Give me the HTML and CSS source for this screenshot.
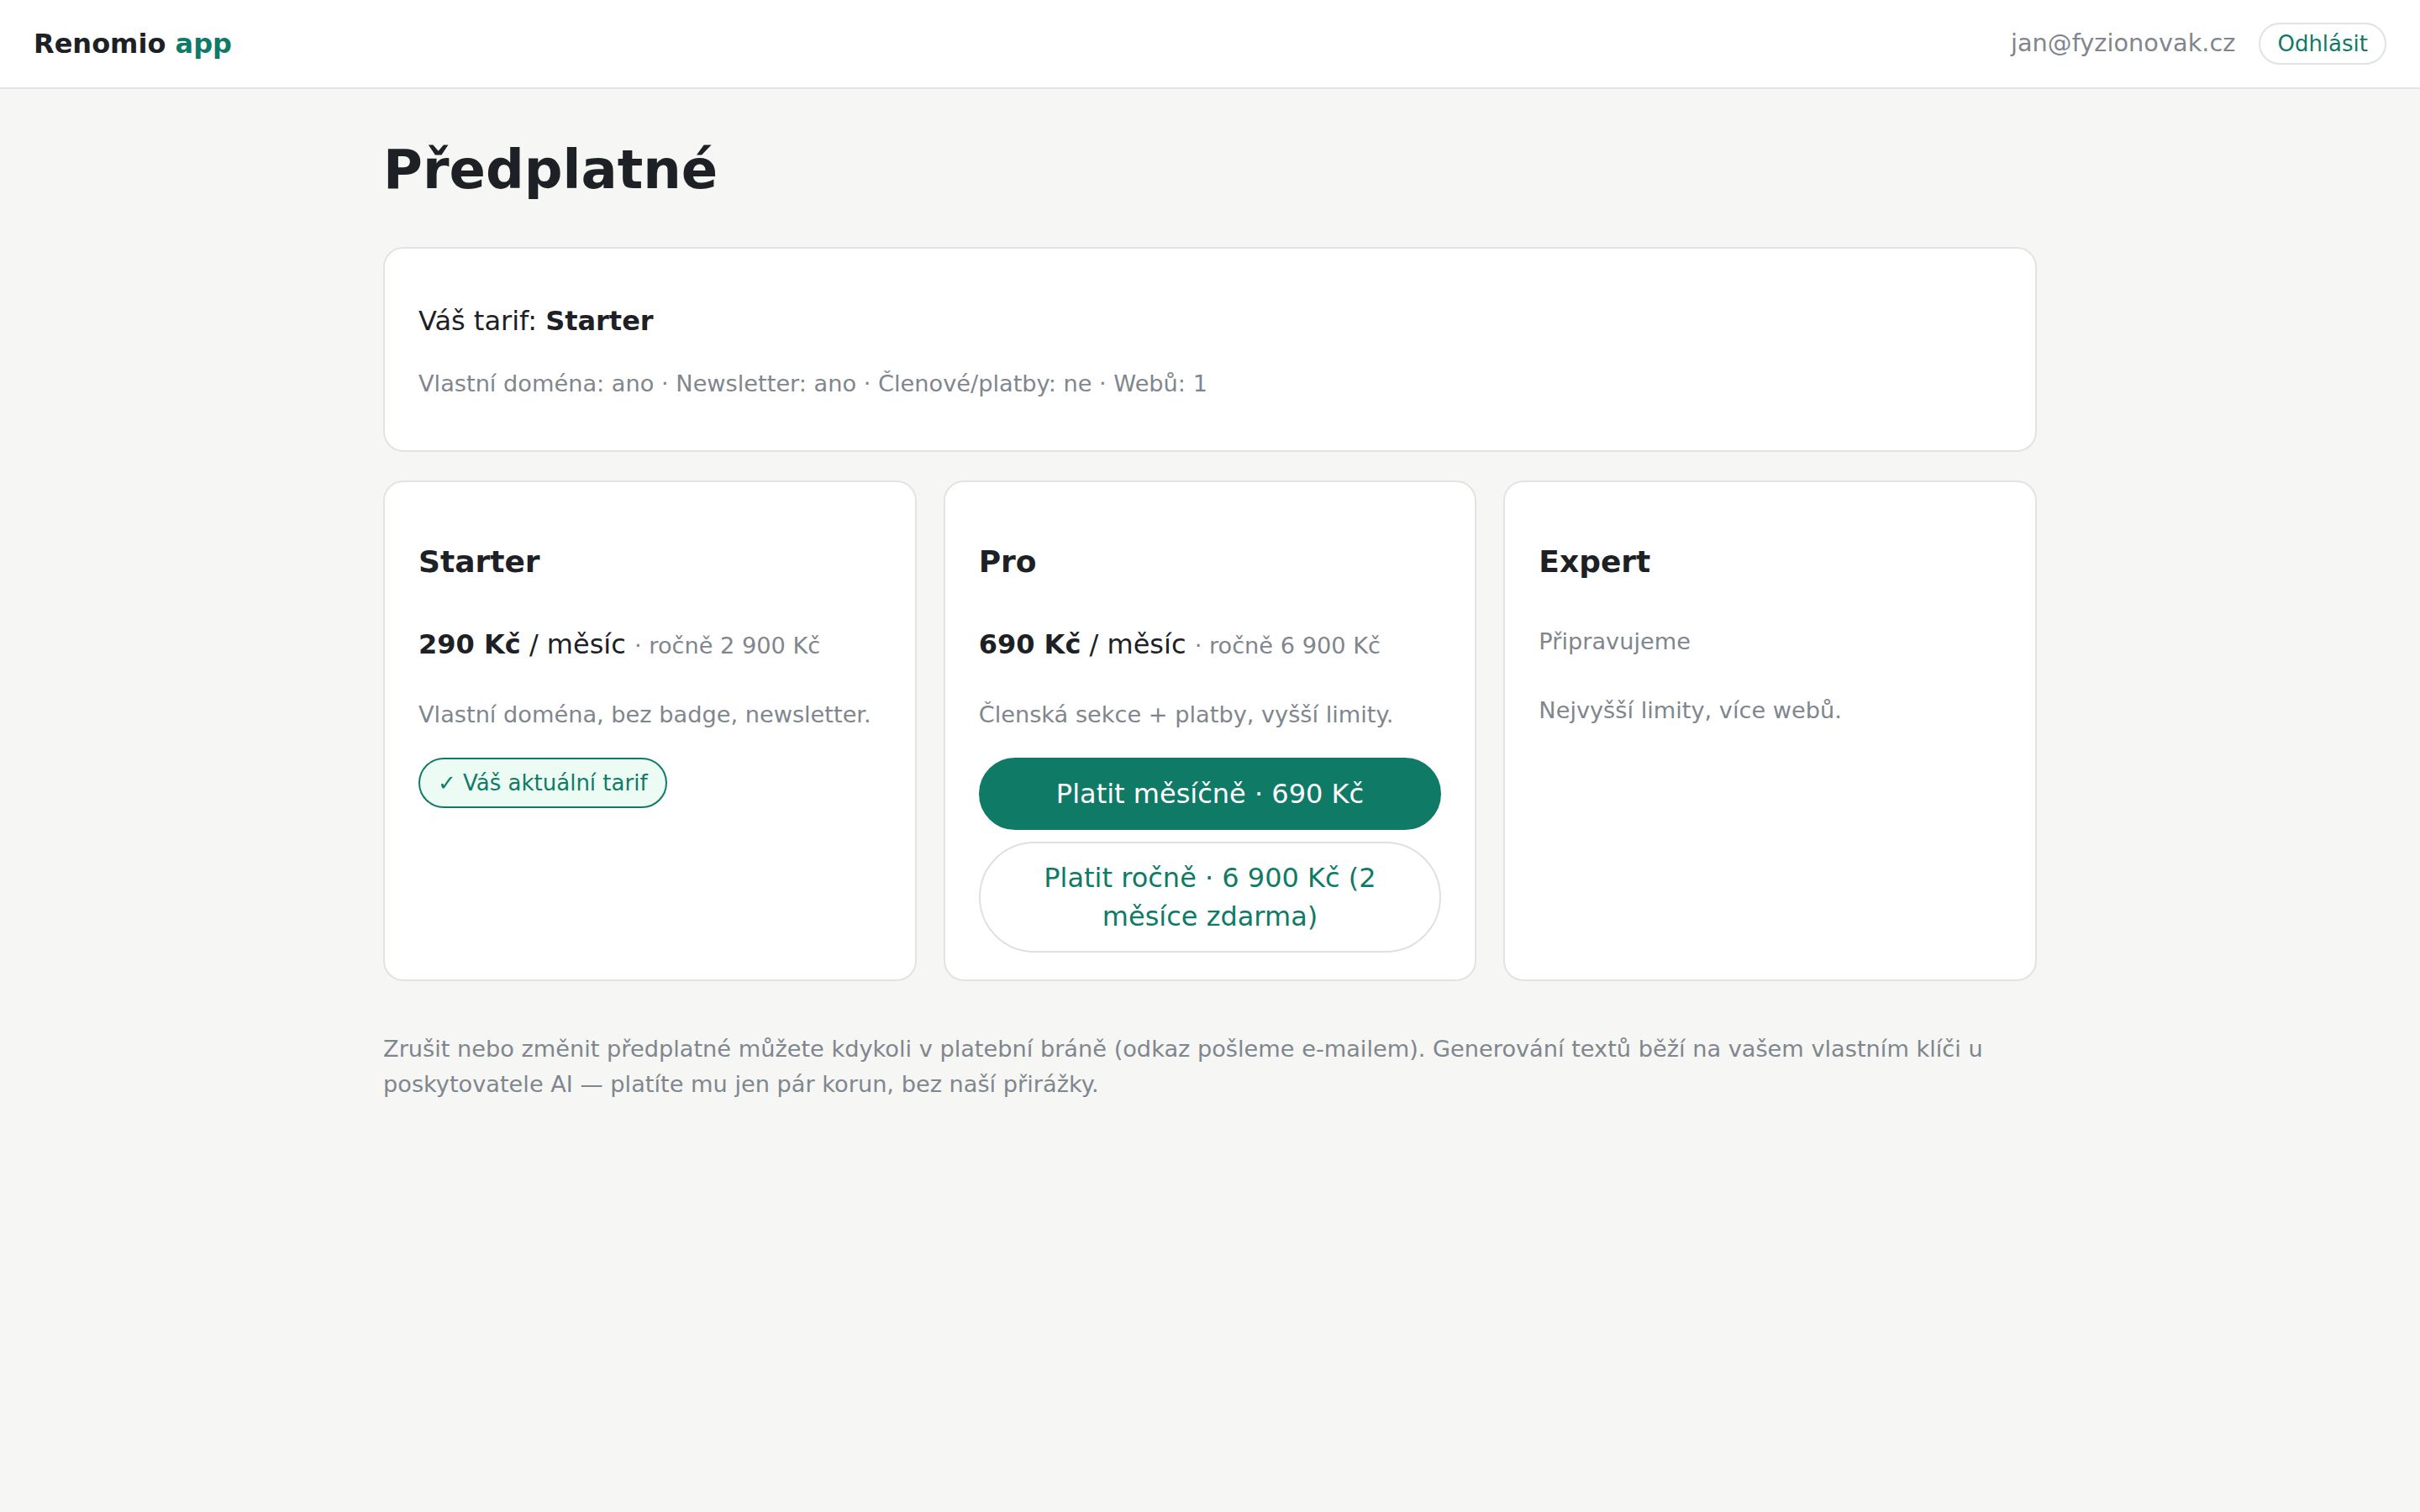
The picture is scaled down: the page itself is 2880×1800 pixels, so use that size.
FILE: index.html
```html
<!DOCTYPE html>
<html lang="cs">
<head>
    <meta charset="UTF-8">
    <meta name="viewport" content="width=device-width, initial-scale=1.0">
    <title>Předplatné · Renomio app</title>
    <link rel="stylesheet" href="styles.css">
</head>
<body>
    <header class="topbar">
        <a href="#" class="logo">Renomio <span>app</span></a>
        <div class="account">
            <span class="account-email">jan@fyzionovak.cz</span>
            <a href="#" class="btn-logout">Odhlásit</a>
        </div>
    </header>

    <main class="page">
        <h1>Předplatné</h1>

        <section class="card current">
            <p class="current-plan">Váš tarif: <strong>Starter</strong></p>
            <p class="current-features">Vlastní doména: ano · Newsletter: ano · Členové/platby: ne · Webů: 1</p>
        </section>

        <div class="plans">
            <section class="card plan">
                <h3>Starter</h3>
                <p class="plan-price"><strong>290 Kč</strong> / měsíc <span class="plan-yearly">· ročně 2 900 Kč</span></p>
                <p class="plan-desc">Vlastní doména, bez badge, newsletter.</p>
                <span class="badge">✓ Váš aktuální tarif</span>
            </section>

            <section class="card plan">
                <h3>Pro</h3>
                <p class="plan-price"><strong>690 Kč</strong> / měsíc <span class="plan-yearly">· ročně 6 900 Kč</span></p>
                <p class="plan-desc">Členská sekce + platby, vyšší limity.</p>
                <div class="plan-actions">
                    <a href="#" class="btn btn-primary">Platit měsíčně · 690 Kč</a>
                    <a href="#" class="btn btn-outline">Platit ročně · 6 900 Kč (2 měsíce zdarma)</a>
                </div>
            </section>

            <section class="card plan">
                <h3>Expert</h3>
                <p class="plan-soon">Připravujeme</p>
                <p class="plan-desc">Nejvyšší limity, více webů.</p>
            </section>
        </div>

        <p class="note">Zrušit nebo změnit předplatné můžete kdykoli v platební bráně (odkaz pošleme e-mailem). Generování textů běží na vašem vlastním klíči u poskytovatele AI — platíte mu jen pár korun, bez naší přirážky.</p>
    </main>
</body>
</html>
```

FILE: styles.css
```css
* {
    box-sizing: border-box;
}
body {
    margin: 0;
    font-family: 'DejaVu Sans', 'Noto Sans', sans-serif;
    background-color: #f6f6f4;
    color: #1d2125;
    line-height: 1.5;
}
a {
    text-decoration: none;
}

/* Top bar */
.topbar {
    display: flex;
    justify-content: space-between;
    align-items: center;
    height: 106px;
    padding: 0 40px;
    background-color: #fff;
    border-bottom: 2px solid #e4e4e4;
}
.logo {
    font-size: 32px;
    font-weight: bold;
    color: #1d2125;
}
.logo span {
    color: #0f7b66;
}
.account {
    display: flex;
    align-items: center;
    gap: 28px;
}
.account-email {
    font-size: 28.8px;
    color: #80868e;
}
.btn-logout {
    font-size: 26px;
    line-height: 34px;
    padding: 6px 20px;
    color: #0f7b66;
    background-color: #fff;
    border: 2px solid #e2e2e2;
    border-radius: 999px;
}

/* Page */
.page {
    max-width: 1968px;
    margin: 0 auto;
    padding: 56px 0;
}
h1 {
    font-size: 64px;
    line-height: 80px;
    margin: 0 0 52px;
}
.card {
    background-color: #fff;
    border: 2px solid #e3e3e3;
    border-radius: 24px;
    padding: 32px 40px;
}

/* Current tariff */
.current-plan {
    font-size: 32px;
    line-height: 48px;
    margin: 30px 0 30px;
}
.current-features {
    font-size: 27.2px;
    line-height: 42px;
    margin: 0 0 26px;
    color: #80868e;
}

/* Plans */
.plans {
    display: grid;
    grid-template-columns: repeat(3, 1fr);
    gap: 32px;
    margin-top: 34px;
}
.plan h3 {
    font-size: 36px;
    line-height: 54px;
    margin: 36px 0 47px;
}
.plan-price {
    font-size: 32px;
    line-height: 48px;
    margin: 0 0 37px;
}
.plan-yearly {
    font-size: 27.2px;
    color: #80868e;
}
.plan-desc {
    font-size: 27.2px;
    line-height: 42px;
    margin: 0 0 30px;
    color: #80868e;
}
.plan-soon {
    font-size: 27.2px;
    line-height: 42px;
    margin: 0 0 40px;
    color: #80868e;
}
.badge {
    display: inline-block;
    font-size: 26px;
    line-height: 36px;
    padding: 10px 21px;
    color: #0f7b66;
    background-color: #ecfbf4;
    border: 2px solid #0f7b66;
    border-radius: 999px;
}
.plan-actions {
    display: flex;
    flex-direction: column;
    gap: 14px;
}
.btn {
    display: block;
    font-size: 32px;
    line-height: 46px;
    padding: 18px 32px;
    text-align: center;
    border: 2px solid transparent;
    border-radius: 999px;
}
.btn-primary {
    background-color: #0f7b66;
    border-color: #0f7b66;
    color: #fff;
}
.btn-outline {
    background-color: #fff;
    border-color: #e0e0e0;
    color: #0f7b66;
}

/* Footer note */
.note {
    font-size: 27.2px;
    line-height: 42px;
    margin: 60px 0 0;
    color: #80868e;
}
```
